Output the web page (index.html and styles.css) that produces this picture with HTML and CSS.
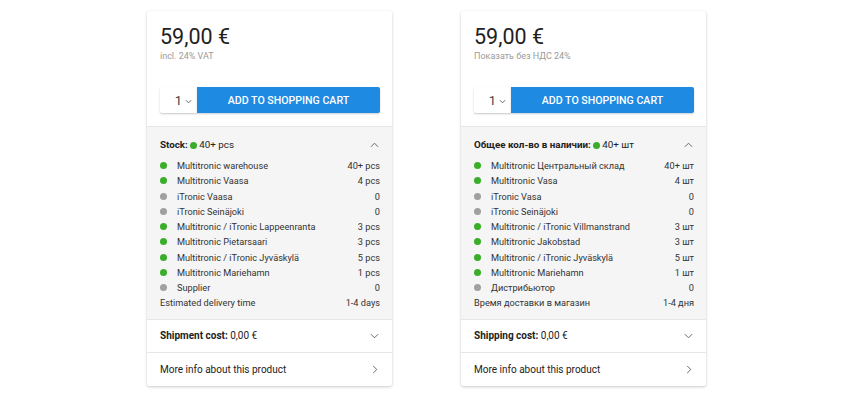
FILE: index.html
```html
<!DOCTYPE html>
<html lang="en">
<head>
<meta charset="utf-8">
<title>Product stock cards</title>
<link rel="stylesheet" href="styles.css">
</head>
<body>
<main class="page">
  <section class="card">
    <div class="buy">
      <div class="price">59,00 €</div>
      <div class="vat">incl. 24% VAT</div>
      <div class="actions">
        <div class="qty">1<svg class="chev-s" viewBox="0 0 8 5"><path d="M1 1l3 3 3-3"/></svg></div>
        <button class="cart">ADD TO SHOPPING CART</button>
      </div>
    </div>
    <div class="stock">
      <div class="stock-head">
        <span><b>Stock:</b> <i class="dot green"></i>40+ pcs</span>
        <svg class="chev" viewBox="0 0 10 6"><path d="M1 5l4-4 4 4"/></svg>
      </div>
      <ul class="rows">
        <li><i class="dot green"></i><span class="name">Multitronic warehouse</span><span class="val">40+ pcs</span></li>
        <li><i class="dot green"></i><span class="name">Multitronic Vaasa</span><span class="val">4 pcs</span></li>
        <li><i class="dot grey"></i><span class="name">iTronic Vaasa</span><span class="val">0</span></li>
        <li><i class="dot grey"></i><span class="name">iTronic Seinäjoki</span><span class="val">0</span></li>
        <li><i class="dot green"></i><span class="name">Multitronic / iTronic Lappeenranta</span><span class="val">3 pcs</span></li>
        <li><i class="dot green"></i><span class="name">Multitronic Pietarsaari</span><span class="val">3 pcs</span></li>
        <li><i class="dot green"></i><span class="name">Multitronic / iTronic Jyväskylä</span><span class="val">5 pcs</span></li>
        <li><i class="dot green"></i><span class="name">Multitronic Mariehamn</span><span class="val">1 pcs</span></li>
        <li><i class="dot grey"></i><span class="name">Supplier</span><span class="val">0</span></li>
        <li class="plain"><span class="name">Estimated delivery time</span><span class="val">1-4 days</span></li>
      </ul>
    </div>
    <div class="line-row">
      <span><b>Shipment cost:</b> 0,00 €</span>
      <svg class="chev" viewBox="0 0 10 6"><path d="M1 1l4 4 4-4"/></svg>
    </div>
    <div class="line-row">
      <span>More info about this product</span>
      <svg class="chev-r" viewBox="0 0 6 10"><path d="M1 1l4 4-4 4"/></svg>
    </div>
  </section>

  <section class="card" lang="ru">
    <div class="buy">
      <div class="price">59,00 €</div>
      <div class="vat">Показать без НДС 24%</div>
      <div class="actions">
        <div class="qty">1<svg class="chev-s" viewBox="0 0 8 5"><path d="M1 1l3 3 3-3"/></svg></div>
        <button class="cart">ADD TO SHOPPING CART</button>
      </div>
    </div>
    <div class="stock">
      <div class="stock-head">
        <span><b>Общее кол-во в наличии:</b> <i class="dot green"></i>40+ шт</span>
        <svg class="chev" viewBox="0 0 10 6"><path d="M1 5l4-4 4 4"/></svg>
      </div>
      <ul class="rows">
        <li><i class="dot green"></i><span class="name">Multitronic Центральный склад</span><span class="val">40+ шт</span></li>
        <li><i class="dot green"></i><span class="name">Multitronic Vasa</span><span class="val">4 шт</span></li>
        <li><i class="dot grey"></i><span class="name">iTronic Vasa</span><span class="val">0</span></li>
        <li><i class="dot grey"></i><span class="name">iTronic Seinäjoki</span><span class="val">0</span></li>
        <li><i class="dot green"></i><span class="name">Multitronic / iTronic Villmanstrand</span><span class="val">3 шт</span></li>
        <li><i class="dot green"></i><span class="name">Multitronic Jakobstad</span><span class="val">3 шт</span></li>
        <li><i class="dot green"></i><span class="name">Multitronic / iTronic Jyväskylä</span><span class="val">5 шт</span></li>
        <li><i class="dot green"></i><span class="name">Multitronic Mariehamn</span><span class="val">1 шт</span></li>
        <li><i class="dot grey"></i><span class="name">Дистрибьютор</span><span class="val">0</span></li>
        <li class="plain"><span class="name">Время доставки в магазин</span><span class="val">1-4 дня</span></li>
      </ul>
    </div>
    <div class="line-row">
      <span><b>Shipping cost:</b> 0,00 €</span>
      <svg class="chev" viewBox="0 0 10 6"><path d="M1 1l4 4 4-4"/></svg>
    </div>
    <div class="line-row">
      <span>More info about this product</span>
      <svg class="chev-r" viewBox="0 0 6 10"><path d="M1 1l4 4-4 4"/></svg>
    </div>
  </section>
</main>
</body>
</html>
```

FILE: styles.css
```css
* { box-sizing: border-box; }

html, body {
  margin: 0;
  padding: 0;
  background: #ffffff;
}

body {
  font-family: Roboto, "Noto Sans", Arial, sans-serif;
  color: #222222;
}

.page {
  height: 400px;
  display: flex;
  align-items: flex-start;
  gap: 69px;
  padding: 11px 0 0 147px;
}

.card {
  width: 245px;
  background: #ffffff;
  border-radius: 2px;
  box-shadow: 0 1px 3px rgba(0, 0, 0, 0.2), 0 0 1px rgba(0, 0, 0, 0.08);
  overflow: hidden;
}

.buy {
  padding: 13px 12px 13px 13px;
}

.price {
  font-size: 21.5px;
  line-height: 26px;
  color: #222222;
}

.vat {
  font-size: 9px;
  line-height: 12px;
  color: #9a9a9a;
}

.actions {
  margin-top: 25px;
  display: flex;
  height: 26px;
}

.qty {
  width: 37px;
  background: #ffffff;
  border-radius: 2px 0 0 2px;
  box-shadow: 0 1px 2px rgba(0, 0, 0, 0.22);
  display: flex;
  align-items: center;
  justify-content: flex-end;
  padding-right: 5px;
  font-size: 13px;
  color: #444444;
}

.chev-s {
  width: 7px;
  height: 5px;
  margin-left: 3px;
  margin-top: 2px;
  fill: none;
  stroke: #666666;
  stroke-width: 1.1;
}

.cart {
  flex: 1;
  border: 0;
  border-radius: 0 2px 2px 0;
  background: #1e8ae2;
  color: #ffffff;
  font-family: Roboto, Arial, sans-serif;
  font-weight: 500;
  font-size: 10.6px;
  padding: 0;
  box-shadow: 0 1px 2px rgba(0, 0, 0, 0.2);
}

.stock {
  background: #f5f5f5;
  border-top: 1px solid #e6e6e6;
  padding: 10px 12px 8px 13px;
  font-size: 9.2px;
}

.stock-head {
  display: flex;
  justify-content: space-between;
  align-items: center;
  height: 15px;
  margin-bottom: 6px;
  font-size: 9.8px;
}

.stock-head b,
.line-row b {
  font-weight: 700;
}

.stock-head .dot {
  margin-right: 2px;
  vertical-align: -1px;
}

.chev {
  width: 9px;
  height: 6px;
  margin-right: 1px;
  fill: none;
  stroke: #5a5a5a;
  stroke-width: 1;
}

.chev-r {
  width: 6px;
  height: 9px;
  margin-right: 2px;
  fill: none;
  stroke: #5a5a5a;
  stroke-width: 1;
}

.rows {
  list-style: none;
  margin: 0;
  padding: 0;
}

.rows li {
  display: flex;
  align-items: center;
  height: 15.25px;
  color: #333333;
}

.rows .name {
  flex: 1;
}

.rows .val {
  text-align: right;
}

.rows li .dot {
  margin-right: 10px;
}

.dot {
  display: inline-block;
  width: 7px;
  height: 7px;
  border-radius: 50%;
  flex: none;
}

.dot.green { background: #3aae2a; }
.dot.grey { background: #a0a0a0; }

.line-row {
  display: flex;
  justify-content: space-between;
  align-items: center;
  height: 33.5px;
  padding: 0 12px 0 13px;
  border-top: 1px solid #e6e6e6;
  font-size: 10px;
  color: #222222;
}
```
